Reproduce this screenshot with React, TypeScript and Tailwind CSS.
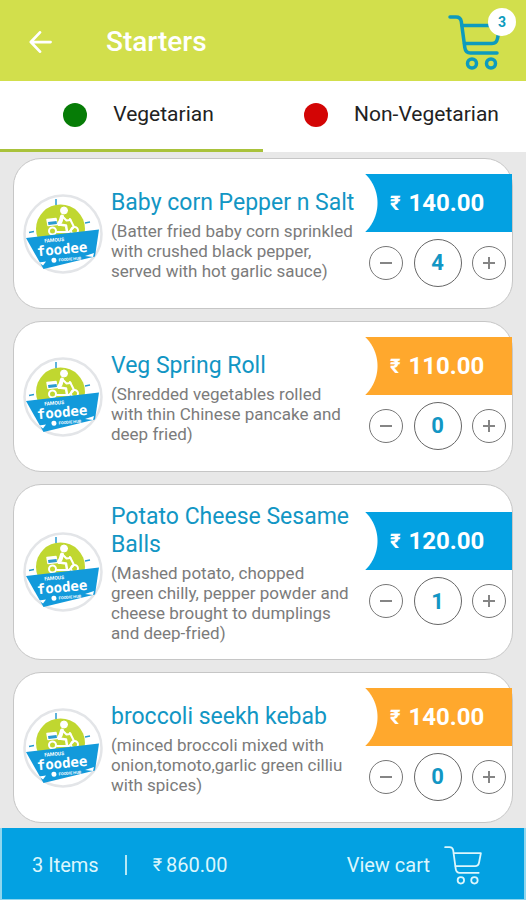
import { useState } from "react";

interface Dish {
  name: string;
  description: string;
  price: number;
  qty: number;
}

const DISHES: Dish[] = [
  {
    name: "Baby corn Pepper n Salt",
    description:
      "(Batter fried baby corn sprinkled\nwith crushed black pepper,\nserved with hot garlic sauce)",
    price: 140,
    qty: 4,
  },
  {
    name: "Veg Spring Roll",
    description:
      "(Shredded vegetables rolled\nwith thin Chinese pancake and\ndeep fried)",
    price: 110,
    qty: 0,
  },
  {
    name: "Potato Cheese Sesame Balls",
    description:
      "(Mashed potato, chopped\ngreen chilly, pepper powder and\ncheese brought to dumplings\nand deep-fried)",
    price: 120,
    qty: 1,
  },
  {
    name: "broccoli seekh kebab",
    description:
      "(minced broccoli mixed with\nonion,tomoto,garlic green cilliu\nwith spices)",
    price: 140,
    qty: 0,
  },
];

// items already in the cart that belong to other menu sections
const OTHER_ITEMS = 1;
const OTHER_TOTAL = 180;

const RIBBON_BLUE =
  "bg-[radial-gradient(circle_at_-28px_50%,transparent_40px,#03a1e2_41px)]";
const RIBBON_ORANGE =
  "bg-[radial-gradient(circle_at_-28px_50%,transparent_40px,#ffa82d_41px)]";

function CartIcon({ className, stroke }: { className: string; stroke: number }) {
  return (
    <svg
      viewBox="0 0 54 56"
      className={className}
      fill="none"
      stroke="currentColor"
      strokeWidth={stroke}
      strokeLinecap="round"
      strokeLinejoin="round"
      aria-hidden="true"
    >
      <path d="M2 3h6q4.500 0 5.300 4.500l3.500 26q.8 5.500 5.500 5.500H49" />
      <path d="M14 11.500H52l-2.500 13q-1 5-5.500 5H16.500" />
      <circle cx="24" cy="49.500" r="4.500" />
      <circle cx="43" cy="49.500" r="4.500" />
    </svg>
  );
}

function FoodeeLogo() {
  return (
    <svg
      viewBox="0 0 80 80"
      className="size-20 shrink-0"
      role="img"
      aria-label="foodee"
    >
      <circle cx="40" cy="40" r="38.500" fill="#fff" stroke="#e3e5e8" strokeWidth="2.500" />
      <circle cx="37.500" cy="35" r="24.500" fill="#c0d730" />
      <path d="M33 5v6M6 38.500l5-1M62 29l5-1" stroke="#2b9bd0" strokeWidth="1.500" />
      <g fill="none" stroke="#fff" strokeLinecap="round" strokeLinejoin="round">
        <circle cx="41" cy="16.500" r="3.500" fill="#fff" strokeWidth="1" />
        <path d="M39 22.500q-1 5-3 7.500" strokeWidth="4" />
        <path d="M36 30.500l7 1 1 6" strokeWidth="2.500" />
        <path d="M40 23l3.500 3.500 4-.5" strokeWidth="2" />
        <path d="M47 25l4 8M34 38h12l4-4" strokeWidth="2" />
        <path d="M24 25.500l9-1 1 6-9 1z" fill="#fff" strokeWidth="1.500" />
        <circle cx="29.500" cy="37" r="3.500" strokeWidth="2" />
        <circle cx="51.500" cy="36.500" r="3.500" strokeWidth="2" />
      </g>
      <path d="M25 28l8.500-1 .5 3-8.500 1z" fill="#2b9bd0" />
      <path d="M3 44l73-8.500-4 27-51.500 12.500z" fill="#129adb" />
      <g transform="rotate(-5 40 55)" fill="#fff" textAnchor="middle" className="font-['Roboto'] font-bold">
        <text x="32" y="47" fontSize="5">FAMOUS</text>
        <text x="39" y="60" fontSize="14" className="font-['DejaVu_Sans_Mono']">foodee</text>
        <text x="46" y="67" fontSize="4">FOODIE HUB</text>
        <circle cx="30" cy="65.500" r="2.500" />
      </g>
      <path d="M16 68.500l7-1-3 4zM62 62l9-3-1 4z" fill="#fff" />
    </svg>
  );
}

interface DishCardProps {
  dish: Dish;
  onChange: (qty: number) => void;
}

function DishCard({ dish, onChange }: DishCardProps) {
  return (
    <li className="flex min-h-[151px] items-center rounded-[28px] border border-[#c6c6c6] bg-white pl-[9px]">
      <FoodeeLogo />
      <div className="min-w-0 flex-1 pt-[18px] pb-4 pl-2">
        <h2 className="text-[23px] leading-7 text-[#1296c4]">{dish.name}</h2>
        <p className="mt-1 text-[17px] leading-5 whitespace-pre-line text-[#7b7b7b]">
          {dish.description}
        </p>
      </div>
      <div className="flex w-[147px] shrink-0 flex-col gap-[7px] pb-[7px]">
        <p
          className={`flex h-[58px] items-center gap-2 pl-[25px] text-2xl font-bold text-white ${
            dish.qty > 0 ? RIBBON_BLUE : RIBBON_ORANGE
          }`}
        >
          <span className="text-xl">₹</span>
          {dish.price.toFixed(2)}
        </p>
        <div className="flex items-center justify-between pr-1.5 pl-1">
          <button
            type="button"
            aria-label={`Remove one ${dish.name}`}
            onClick={() => onChange(Math.max(0, dish.qty - 1))}
            className="flex size-[34px] items-center justify-center rounded-full border border-[#777]"
          >
            <span className="h-0.5 w-3 bg-[#858585]" />
          </button>
          <output className="flex size-12 items-center justify-center rounded-full border border-[#666] text-[22px] font-bold text-[#1296c4]">
            {dish.qty}
          </output>
          <button
            type="button"
            aria-label={`Add one ${dish.name}`}
            onClick={() => onChange(dish.qty + 1)}
            className="flex size-[34px] items-center justify-center rounded-full border border-[#777]"
          >
            <svg viewBox="0 0 12 12" className="size-3 text-[#858585]" aria-hidden="true">
              <path d="M6 0v12M0 6h12" stroke="currentColor" strokeWidth="2" />
            </svg>
          </button>
        </div>
      </div>
    </li>
  );
}

export default function App() {
  const [dishes, setDishes] = useState(DISHES);
  const [tab, setTab] = useState("veg");

  const itemCount =
    dishes.filter((dish) => dish.qty > 0).length + OTHER_ITEMS;
  const total =
    dishes.reduce((sum, dish) => sum + dish.price * dish.qty, 0) + OTHER_TOTAL;

  const setQty = (name: string, qty: number) => {
    setDishes(dishes.map((dish) => (dish.name === name ? { ...dish, qty } : dish)));
  };

  return (
    <div className="flex min-h-screen flex-col bg-[#e8e8e8] font-['Roboto',sans-serif]">
      <header className="flex h-[81px] items-center bg-[#d2df4c] pt-0.5 pr-6 pl-7">
        <button type="button" aria-label="Back" className="text-white">
          <svg viewBox="0 0 26 24" className="h-[22px] w-6" fill="none" stroke="currentColor" strokeWidth="3" aria-hidden="true">
            <path d="M13 1.500L3 12l10 10.500M3 12h21.500" strokeLinecap="round" strokeLinejoin="round" />
          </svg>
        </button>
        <h1 className="flex-1 pl-[54px] text-[28px] font-medium text-white">Starters</h1>
        <button type="button" aria-label="Cart" className="relative text-[#0d9bbd]">
          <CartIcon className="h-[56px] w-[54px]" stroke={3.5} />
          <span className="absolute -top-1.5 -right-3.5 flex size-7 items-center justify-center rounded-full bg-white text-sm font-bold">
            {itemCount}
          </span>
        </button>
      </header>

      <div role="tablist" className="grid h-[71px] grid-cols-2 bg-white text-[21px] text-[#222]">
        <button
          type="button"
          role="tab"
          aria-selected={tab === "veg"}
          onClick={() => setTab("veg")}
          className={`flex items-center justify-center gap-[26px] border-b-3 pl-3.5 ${
            tab === "veg" ? "border-[#a9c23b]" : "border-transparent"
          }`}
        >
          <span className="size-6 rounded-full bg-[#067c06]" />
          Vegetarian
        </button>
        <button
          type="button"
          role="tab"
          aria-selected={tab === "nonveg"}
          onClick={() => setTab("nonveg")}
          className={`flex items-center justify-center gap-[26px] border-b-3 pl-3.5 ${
            tab === "nonveg" ? "border-[#a9c23b]" : "border-transparent"
          }`}
        >
          <span className="size-6 rounded-full bg-[#d30505]" />
          Non-Vegetarian
        </button>
      </div>

      <main className="flex-1 px-[13px] pt-1.5 pb-1">
        <ul className="flex flex-col gap-3">
          {dishes.map((dish) => (
            <DishCard
              key={dish.name}
              dish={dish}
              onChange={(qty) => setQty(dish.name, qty)}
            />
          ))}
        </ul>
      </main>

      <footer className="flex h-[72px] items-center border-x-2 border-b border-[#8fd6ee] bg-[#03a1e2] pt-0.5 pr-10 pl-[30px] text-xl text-[#dcf6fc]">
        <span>{itemCount} Items</span>
        <span className="mx-[26px] h-5 w-0.5 bg-[#b5e8f5]" />
        <span className="flex flex-1 items-center gap-1">
          <span className="text-lg">₹</span>
          {total.toFixed(2)}
        </span>
        <a href="#cart" className="flex items-center gap-3">
          View cart
          <CartIcon className="h-10 w-[42px]" stroke={2.5} />
        </a>
      </footer>
    </div>
  );
}
